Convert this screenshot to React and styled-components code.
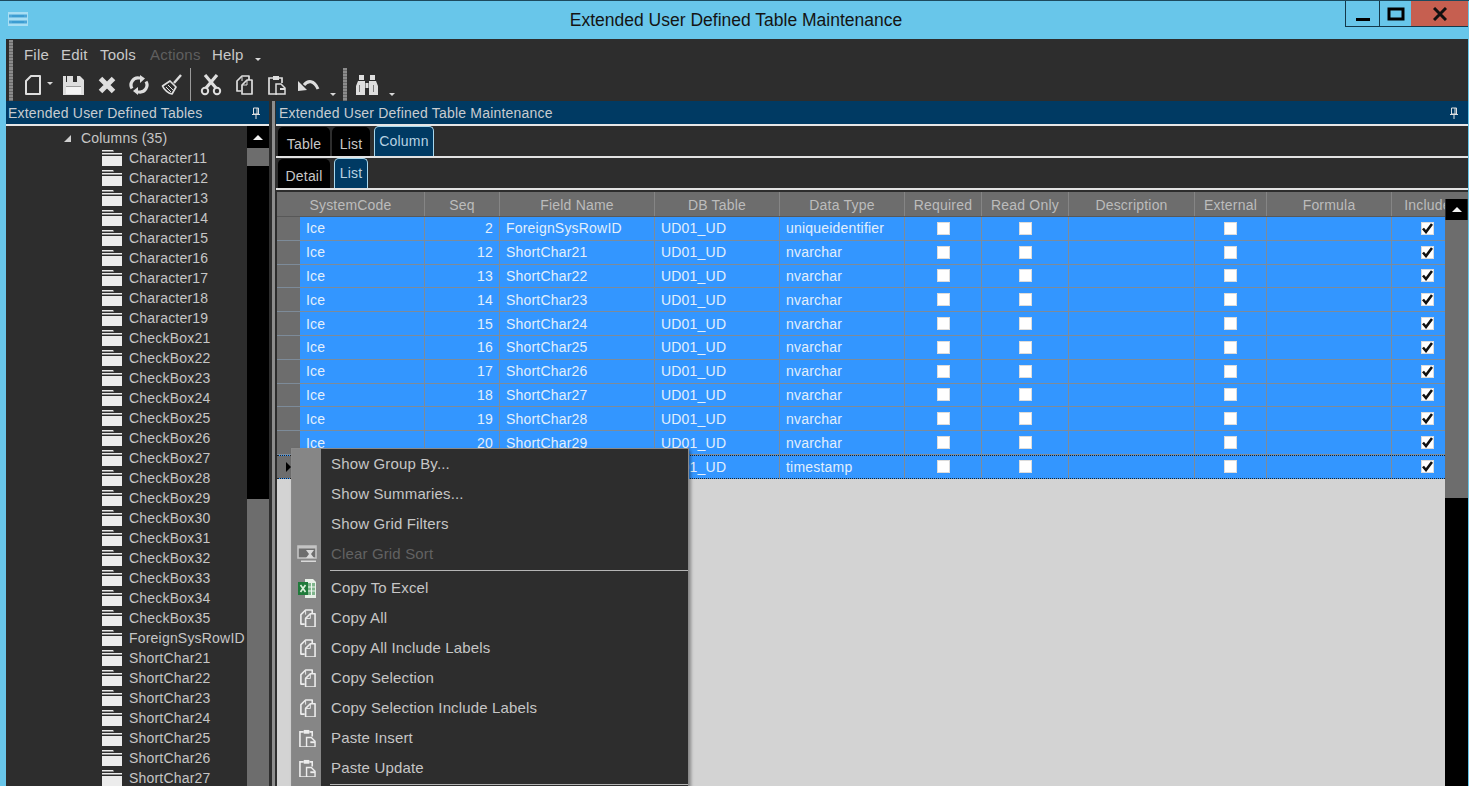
import React from 'react';
import styled, { createGlobalStyle } from 'styled-components';

const GlobalStyle = createGlobalStyle`
  html, body { margin: 0; padding: 0; height: 100%; overflow: hidden; background: #68c6ea; }
  body { font-family: "Liberation Sans", Arial, sans-serif; }
  * { box-sizing: border-box; }
`;

const treeItems = [
  'Character11', 'Character12', 'Character13', 'Character14', 'Character15', 'Character16', 'Character17',
  'Character18', 'Character19', 'CheckBox21', 'CheckBox22', 'CheckBox23', 'CheckBox24', 'CheckBox25',
  'CheckBox26', 'CheckBox27', 'CheckBox28', 'CheckBox29', 'CheckBox30', 'CheckBox31', 'CheckBox32',
  'CheckBox33', 'CheckBox34', 'CheckBox35', 'ForeignSysRowID', 'ShortChar21', 'ShortChar22', 'ShortChar23',
  'ShortChar24', 'ShortChar25', 'ShortChar26', 'ShortChar27',
];

const headers = ['Seq', 'Field Name', 'DB Table', 'Data Type', 'Required', 'Read Only', 'Description', 'External', 'Formula', 'Include'];

const rows = [
  [2, 'ForeignSysRowID', 'uniqueidentifier'],
  [12, 'ShortChar21', 'nvarchar'],
  [13, 'ShortChar22', 'nvarchar'],
  [14, 'ShortChar23', 'nvarchar'],
  [15, 'ShortChar24', 'nvarchar'],
  [16, 'ShortChar25', 'nvarchar'],
  [17, 'ShortChar26', 'nvarchar'],
  [18, 'ShortChar27', 'nvarchar'],
  [19, 'ShortChar28', 'nvarchar'],
  [20, 'ShortChar29', 'nvarchar'],
  [21, 'SysRevID', 'timestamp'],
];

// last column runs on under the grid's scrollbar
const columns = '23px 125px 75px 155px 125px 125px 77px 87px 126px 72px 125px 72px';

const Window = styled.div`
  width: 1469px;
  height: 786px;
  display: flex;
  flex-direction: column;
  position: relative;
  overflow: hidden;
  background: #68c6ea;
  border-top: 1px solid #1d4a5e;
`;

const TitleBar = styled.div`
  height: 38px;
  flex: none;
  display: flex;
  position: relative;
  justify-content: center;
  padding: 9px 0 0 3px;
  font-size: 17.5px;
  color: #141414;
`;

const AppIcon = styled.svg`
  position: absolute;
  left: 8px;
  top: 10px;
`;

const WinButtons = styled.div`
  position: absolute;
  top: 0;
  right: 1px;
  display: flex;
  height: 26px;
`;

const WinButton = styled.div`
  width: ${p => p.$w}px;
  height: 26px;
  display: flex;
  align-items: center;
  justify-content: center;
  background: ${p => p.$close ? '#c65f50' : 'transparent'};
  border-left: ${p => p.$close ? 'none' : '1px solid #14384a'};
  border-bottom: 1px solid #14384a;
`;

const Frame = styled.div`
  flex: 1;
  min-height: 0;
  margin: 0 1px 0 6px;
  background: #2d2d2d;
  display: flex;
  flex-direction: column;
  color: #c6c6c6;
  font-size: 14px;
  letter-spacing: 0.2px;
`;

const Gripper = styled.div`
  width: 4px;
  height: 100%;
  flex: none;
  margin: ${p => p.$margin || '0'};
  background: repeating-linear-gradient(to bottom, #8c8c8c 0 2px, #6a6a6a 2px 3px);
`;

const MenuBar = styled.div`
  height: 29px;
  flex: none;
  display: flex;
  align-items: center;
  padding: 1px 0 0 3px;
  font-size: 15px;
`;

const MenuLabel = styled.span`
  width: ${p => p.$w}px;
  flex: none;
  color: ${p => p.$off ? '#5f5f5f' : '#c9c9c9'};
`;

const Caret = styled.span`
  flex: none;
  width: 0;
  height: 0;
  align-self: flex-end;
  margin: ${p => p.$margin || '0 0 6px 0'};
  border-left: 3px solid transparent;
  border-right: 3px solid transparent;
  border-top: 3px solid #d8d8d8;
`;

const ToolBar = styled.div`
  height: 33px;
  flex: none;
  display: flex;
  align-items: center;
  padding-left: 3px;
`;

const Tool = styled.div`
  flex: none;
  width: ${p => p.$w}px;
  display: flex;
  justify-content: center;
  align-items: center;
`;

const ToolSep = styled.div`
  flex: none;
  width: 1px;
  height: 100%;
  background: #9a9a9a;
  margin: ${p => p.$margin};
`;

const Panes = styled.div`
  flex: 1;
  min-height: 0;
  display: flex;
`;

const LeftPane = styled.div`
  width: 263px;
  flex: none;
  display: flex;
  flex-direction: column;
  min-height: 0;
`;

const Splitter = styled.div`
  width: 3px;
  flex: none;
  margin: 0 1px 0 3px;
  background: #8d8d8d;
`;

const RightPane = styled.div`
  flex: 1;
  min-width: 0;
  display: flex;
  flex-direction: column;
  min-height: 0;
`;

const PaneHeader = styled.div`
  height: 25px;
  flex: none;
  display: flex;
  align-items: center;
  justify-content: space-between;
  padding: 1px ${p => p.$right}px 0 ${p => p.$left}px;
  background: #003a63;
  border-bottom: 2px solid #e6e6e6;
  color: #c8ccd0;
`;

const TreeArea = styled.div`
  flex: 1;
  min-height: 0;
  display: flex;
`;

const Tree = styled.div`
  flex: 1;
  min-width: 0;
  overflow: hidden;
  padding-top: 2px;
`;

const TreeRow = styled.div`
  height: 20px;
  display: flex;
  align-items: center;
  padding-left: ${p => p.$indent}px;
  white-space: nowrap;
`;

const ExpandMark = styled.span`
  width: 0;
  height: 0;
  margin-right: 10px;
  border-left: 7px solid transparent;
  border-bottom: 7px solid #cfcfcf;
`;

const FolderIcon = styled.svg`
  flex: none;
  margin-right: 7px;
`;

const TreeScroll = styled.div`
  width: 22px;
  flex: none;
  display: flex;
  flex-direction: column;
`;

const ScrollButton = styled.div`
  width: ${p => p.$w || 22}px;
  height: ${p => p.$h}px;
  flex: none;
  background: #000;
  display: flex;
  align-items: center;
  justify-content: center;
`;

const ScrollUp = styled.span`
  width: 0;
  height: 0;
  border-left: 5px solid transparent;
  border-right: 5px solid transparent;
  border-bottom: 5px solid #f2f2f2;
`;

const ScrollPart = styled.div`
  flex: ${p => p.$grow ? 1 : 'none'};
  width: 100%;
  height: ${p => p.$h ? `${p.$h}px` : 'auto'};
  background: ${p => p.$c};
`;

const TabRow = styled.div`
  height: 32px;
  flex: none;
  display: flex;
  align-items: flex-end;
  gap: 2px;
  padding-left: 2px;
  border-bottom: 2px solid #e2e2e2;
`;

const Tab = styled.div`
  height: ${p => p.$active ? 30 : 29}px;
  width: ${p => p.$w}px;
  margin-left: ${p => p.$active ? 2 : 0}px;
  display: flex;
  justify-content: center;
  align-items: center;
  padding-top: ${p => p.$active ? 0 : 5}px;
  padding-bottom: ${p => p.$active ? 1 : 0}px;
  border-radius: 5px 5px 0 0;
  background: ${p => p.$active ? '#003a63' : '#000'};
  border: ${p => p.$active ? '1px solid #a8d8ee' : 'none'};
  border-bottom: none;
  color: ${p => p.$active ? '#b9d2e2' : '#c8c8c8'};
`;

const GridArea = styled.div`
  flex: 1;
  min-height: 0;
  display: flex;
  padding-top: 2px;
  background: #2d2d2d;
`;

const GridMain = styled.div`
  flex: 1;
  min-width: 0;
  overflow: hidden;
  background: #d3d3d3;
  margin-left: 1px;
`;

const HeaderRow = styled.div`
  display: grid;
  grid-template-columns: ${columns};
  height: 25px;
  background: #6d6d6d;
  border-bottom: 1px solid #585858;
`;

const HeaderCell = styled.div`
  grid-column: ${p => p.$span ? `span ${p.$span}` : 'auto'};
  display: flex;
  align-items: center;
  justify-content: center;
  overflow: hidden;
  white-space: nowrap;
  color: #bcbcbc;
  padding-top: 2px;
  border-right: 1px solid #858585;
`;

const DataRow = styled.div`
  display: grid;
  grid-template-columns: ${columns};
  height: 23.8px;
  background: #3396ff;
  color: #e2effc;
  border-bottom: ${p => p.$current ? '1px dotted #222' : '1px solid #7d8b99'};
  border-top: ${p => p.$current ? '1px dotted #222' : 'none'};
`;

const RowHead = styled.div`
  background: #6d6d6d;
  display: flex;
  align-items: center;
  padding-left: 9px;
`;

const CurrentMark = styled.span`
  width: 0;
  height: 0;
  border-top: 5px solid transparent;
  border-bottom: 5px solid transparent;
  border-left: 5px solid #000;
`;

const Cell = styled.div`
  display: flex;
  align-items: center;
  justify-content: ${p => p.$align || 'flex-start'};
  padding: 0 6px;
  overflow: hidden;
  white-space: nowrap;
  border-right: 1px solid #7d8b99;
`;

const CheckBox = styled.span`
  width: 13px;
  height: 13px;
  background: #fff;
  border: 1px solid #dcdcdc;
  display: flex;
  align-items: center;
  justify-content: center;
`;

const GridScroll = styled.div`
  width: 23px;
  flex: none;
  display: flex;
  flex-direction: column;
  align-items: center;
`;

const ContextMenu = styled.div`
  position: absolute;
  left: 291px;
  top: 447px;
  width: 398px;
  height: 345px;
  display: flex;
  background: #2d2d2d;
  border: 1px solid #8a8a8a;
  box-shadow: 2px 2px 3px rgba(0, 0, 0, 0.35);
  color: #c6c6c6;
  font-size: 15px;
  letter-spacing: 0.15px;
`;

const MenuGutter = styled.div`
  width: 29px;
  flex: none;
  background: #868686;
  display: flex;
  flex-direction: column;
`;

const GutterSlot = styled.div`
  height: ${p => p.$h}px;
  flex: none;
  display: flex;
  align-items: center;
  justify-content: center;
  padding-left: 1px;
`;

const MenuList = styled.div`
  flex: 1;
  min-width: 0;
  display: flex;
  flex-direction: column;
`;

const MenuItem = styled.div`
  height: 30px;
  flex: none;
  display: flex;
  align-items: center;
  padding: 0 0 2px 10px;
  color: ${p => p.$off ? '#626262' : '#c6c6c6'};
`;

const MenuDivider = styled.div`
  height: 4px;
  flex: none;
  margin-left: 9px;
  border-top: 1px solid #b5b5b5;
  margin-top: 1px;
  margin-bottom: -1px;
`;

const fg = '#dedede';

const DocIcon = () => (
  <svg width="18" height="20" viewBox="0 0 18 20" fill="none" stroke={fg} strokeWidth="2"><path d="M7 1h9v18H2V6z" strokeLinejoin="round" /></svg>
);

const SaveIcon = () => (
  <svg width="21" height="20" viewBox="0 0 21 20">
    <path fill={fg} d="M0 1h17l4 4v15H0z" />
    <path fill="#2d2d2d" d="M10 1h4v6h-4zM3 1h1v6H3z" />
    <path fill="#9c9c9c" d="M3 11h15v1H3z" />
    <path fill="#f4f4f4" d="M3 12h15v7H3z" />
  </svg>
);

const CrossIcon = () => (
  <svg width="18" height="18" viewBox="0 0 18 18"><path stroke={fg} strokeWidth="5" d="M2.5 2.5l13 13M15.5 2.5l-13 13" /></svg>
);

const RefreshIcon = () => (
  <svg width="20" height="20" viewBox="0 0 20 20" fill="none" stroke={fg} strokeWidth="3.2">
    <path d="M3 13.5A7 7 0 0 1 10 3h2" />
    <path d="M17 6.5A7 7 0 0 1 10 17H8" />
    <path fill={fg} stroke="none" d="M11 0l5 3.5L11 8zM9 12v8l-5-4z" />
  </svg>
);

const BroomIcon = () => (
  <svg width="22" height="22" viewBox="0 0 22 22">
    <path stroke={fg} strokeWidth="2.4" d="M13 9l7-8" />
    <path fill="none" stroke={fg} strokeWidth="1.7" strokeLinejoin="round" d="M9 7l6 6-4 7c-3-.5-8-4-9.5-8z" />
    <path stroke={fg} d="M5 13l5 5M7 11l5 5" />
  </svg>
);

const CutIcon = () => (
  <svg width="22" height="22" viewBox="0 0 22 22" fill="none" stroke={fg}>
    <path strokeWidth="3.2" d="M5 1l11 13M17 1L6 14" />
    <circle cx="5" cy="17" r="3.2" strokeWidth="2" />
    <circle cx="17" cy="17" r="3.2" strokeWidth="2" />
  </svg>
);

const CopyIcon = ({ size = 18, color = fg }) => (
  <svg width={size} height={size * 20 / 18} viewBox="0 0 18 20" fill="none" stroke={color} strokeWidth="1.7" strokeLinejoin="round">
    <path d="M6 16H2V6l5-5h7v4" />
    <path d="M7 10l5-5h5v14H7z" />
    <path d="M7 6v-4M7 10h5V5" strokeWidth="1" />
  </svg>
);

const PasteIcon = ({ size = 18, color = fg }) => (
  <svg width={size} height={size * 20 / 18} viewBox="0 0 18 20" fill="none" stroke={color} strokeWidth="1.7">
    <path d="M5 3H1v16h8" />
    <path d="M11 3h3v5" />
    <path fill={color} stroke="none" d="M5 1h6v4H5z" />
    <path strokeWidth="1.5" d="M8 9h5l4 4v6H8z" />
    <path fill={color} stroke="none" d="M12 13h5v2h-5z" />
  </svg>
);

const UndoIcon = () => (
  <svg width="22" height="14" viewBox="0 0 22 14" fill="none"><path stroke={fg} strokeWidth="3" d="M6 7c4-5 10-5 14 4" /><path fill={fg} d="M0 3l9 9-9 1z" /></svg>
);

const BinocularsIcon = () => (
  <svg width="22" height="20" viewBox="0 0 22 20" fill={fg}>
    <path d="M3 0h5v5H3zM14 0h5v5h-5z" />
    <path d="M2 6h7v14H0V11zM13 6h7l2 5v9h-9z" />
    <path d="M9.5 8h3v5h-3z" />
    <path fill="#7a7a7a" d="M3 10h1v7H3zM17 10h1v7h-1z" />
  </svg>
);

const ExcelIcon = () => (
  <svg width="18" height="19" viewBox="0 0 18 19">
    <path fill="#e8f0e8" d="M7 0h8l3 3v16H7z" />
    <path fill="#7fb58c" d="M10 4h7v12h-7z" />
    <path stroke="#eef6ef" d="M13.5 4v12M10 8h7M10 12h7" />
    <path fill="#1f7a3a" d="M0 3h10v13H0z" />
    <path stroke="#d8efd8" strokeWidth="1.7" d="M2.5 6l5 7M7.5 6l-5 7" />
  </svg>
);

const ClearSortIcon = () => (
  <svg width="20" height="18" viewBox="0 0 20 18">
    <path fill="#6e6e6e" stroke="#c4c4c4" strokeWidth="1.6" d="M1 1h18v12H1z" />
    <path fill="#c4c4c4" d="M1 1h18v2.5H1z" />
    <path fill="#dadada" d="M9 5h8l-3 4 3 4H9l3-4zM4 15.5h15V17H4z" />
  </svg>
);

const Folder = () => (
  <FolderIcon width="20" height="16" viewBox="0 0 20 16">
    <path fill="#ececec" d="M0 0h11l1 1.5H0zM0 3h20v1.5H0zM0 6h20v10H0z" />
  </FolderIcon>
);

const Pin = () => (
  <svg width="10" height="12" viewBox="0 0 10 12" fill="none" stroke="#e0e0e0"><path d="M2.5 1h5v6h-5z" /><path d="M1 7.5h8M5 8v4M6 1v6" /></svg>
);

const Check = () => (
  <svg width="11" height="11" viewBox="0 0 11 11" fill="none"><path stroke="#111" strokeWidth="2.6" d="M1 5.5l3 3.5 6-8" /></svg>
);

export default function App() {
  return (
    <Window>
      <GlobalStyle />
      <TitleBar>
        <AppIcon width="20" height="16" viewBox="0 0 20 16">
          <path fill="#a8def3" d="M0 1h20v14H0z" />
          <path fill="#4ba6d8" d="M1 3.5h18v3H1zM1 9.5h18v3H1z" />
          <path fill="#2f93cc" d="M4 4.5h12v1H4zM4 10.5h12v1H4z" />
        </AppIcon>
        Extended User Defined Table Maintenance
        <WinButtons>
          <WinButton $w={34}>
            <svg width="16" height="14" viewBox="0 0 16 14"><path d="M1 11h14v3H1z" /></svg>
          </WinButton>
          <WinButton $w={32}>
            <svg width="18" height="14" viewBox="0 0 18 14" fill="none"><path stroke="#000" strokeWidth="3" d="M2 2h14v10H2z" /></svg>
          </WinButton>
          <WinButton $w={57} $close>
            <svg width="14" height="14" viewBox="0 0 14 14"><path stroke="#111" strokeWidth="3" d="M1 1l12 12M13 1L1 13" /></svg>
          </WinButton>
        </WinButtons>
      </TitleBar>
      <Frame>
        <MenuBar>
          <Gripper $margin="0 11px 0 0" />
          <MenuLabel $w={37}>File</MenuLabel>
          <MenuLabel $w={39}>Edit</MenuLabel>
          <MenuLabel $w={50}>Tools</MenuLabel>
          <MenuLabel $w={62} $off>Actions</MenuLabel>
          <MenuLabel $w={42}>Help</MenuLabel>
          <Caret $margin="0 0 7px 1px" />
        </MenuBar>
        <ToolBar>
          <Gripper $margin="0 8px 0 0" />
          <Tool $w={23}><DocIcon /></Tool>
          <Caret $margin="0 3px 16px 3px" />
          <Tool $w={35}><SaveIcon /></Tool>
          <Tool $w={31}><CrossIcon /></Tool>
          <Tool $w={33}><RefreshIcon /></Tool>
          <Tool $w={33}><BroomIcon /></Tool>
          <ToolSep $margin="0 9px 0 2px" />
          <Tool $w={22}><CutIcon /></Tool>
          <Tool $w={43}><CopyIcon /></Tool>
          <Tool $w={23}><PasteIcon /></Tool>
          <Tool $w={41}><UndoIcon /></Tool>
          <Caret $margin="0 0 5px 1px" />
          <Gripper $margin="0 0 0 7px" />
          <Tool $w={40}><BinocularsIcon /></Tool>
          <Caret $margin="0 0 5px 2px" />
        </ToolBar>
        <Panes>
          <LeftPane>
            <PaneHeader $left={2} $right={8}>
              Extended User Defined Tables
              <Pin />
            </PaneHeader>
            <TreeArea>
              <Tree>
                <TreeRow $indent={58}><ExpandMark />Columns (35)</TreeRow>
                {treeItems.map(name => (
                  <TreeRow key={name} $indent={96}><Folder />{name}</TreeRow>
                ))}
              </Tree>
              <TreeScroll>
                <ScrollButton $h={22}><ScrollUp /></ScrollButton>
                <ScrollPart $h={18} $c="#6d6d6d" />
                <ScrollPart $h={333} $c="#000" />
                <ScrollPart $grow $c="#6d6d6d" />
              </TreeScroll>
            </TreeArea>
          </LeftPane>
          <Splitter />
          <RightPane>
            <PaneHeader $left={3} $right={9}>
              Extended User Defined Table Maintenance
              <Pin />
            </PaneHeader>
            <TabRow>
              <Tab $w={52}>Table</Tab>
              <Tab $w={38}>List</Tab>
              <Tab $w={60} $active>Column</Tab>
            </TabRow>
            <TabRow>
              <Tab $w={52}>Detail</Tab>
              <Tab $w={34} $active>List</Tab>
            </TabRow>
            <GridArea>
              <GridMain>
                <HeaderRow>
                  <HeaderCell $span={2}>SystemCode</HeaderCell>
                  {headers.map(h => <HeaderCell key={h}>{h}</HeaderCell>)}
                </HeaderRow>
                {rows.map(([seq, field, type], i) => (
                  <DataRow key={seq} $current={i === rows.length - 1}>
                    <RowHead>{i === rows.length - 1 && <CurrentMark />}</RowHead>
                    <Cell>Ice</Cell>
                    <Cell $align="flex-end">{seq}</Cell>
                    <Cell>{field}</Cell>
                    <Cell>UD01_UD</Cell>
                    <Cell>{type}</Cell>
                    <Cell $align="center"><CheckBox /></Cell>
                    <Cell $align="center"><CheckBox /></Cell>
                    <Cell />
                    <Cell $align="center"><CheckBox /></Cell>
                    <Cell />
                    <Cell $align="center"><CheckBox><Check /></CheckBox></Cell>
                  </DataRow>
                ))}
              </GridMain>
              <GridScroll>
                <ScrollPart $h={7} $c="#6d6d6d" />
                <ScrollButton $h={21} $w={21}><ScrollUp /></ScrollButton>
                <ScrollPart $h={278} $c="#6d6d6d" />
                <ScrollPart $grow $c="#000" />
              </GridScroll>
            </GridArea>
          </RightPane>
        </Panes>
      </Frame>
      <ContextMenu>
        <MenuGutter>
          <GutterSlot $h={90} />
          <GutterSlot $h={30}><ClearSortIcon /></GutterSlot>
          <GutterSlot $h={4} />
          <GutterSlot $h={30}><ExcelIcon /></GutterSlot>
          <GutterSlot $h={30}><CopyIcon size={17} color="#ededed" /></GutterSlot>
          <GutterSlot $h={30}><CopyIcon size={17} color="#ededed" /></GutterSlot>
          <GutterSlot $h={30}><CopyIcon size={17} color="#ededed" /></GutterSlot>
          <GutterSlot $h={30}><CopyIcon size={17} color="#ededed" /></GutterSlot>
          <GutterSlot $h={30}><PasteIcon size={17} color="#ededed" /></GutterSlot>
          <GutterSlot $h={30}><PasteIcon size={17} color="#ededed" /></GutterSlot>
        </MenuGutter>
        <MenuList>
          <MenuItem>Show Group By...</MenuItem>
          <MenuItem>Show Summaries...</MenuItem>
          <MenuItem>Show Grid Filters</MenuItem>
          <MenuItem $off>Clear Grid Sort</MenuItem>
          <MenuDivider />
          <MenuItem>Copy To Excel</MenuItem>
          <MenuItem>Copy All</MenuItem>
          <MenuItem>Copy All Include Labels</MenuItem>
          <MenuItem>Copy Selection</MenuItem>
          <MenuItem>Copy Selection Include Labels</MenuItem>
          <MenuItem>Paste Insert</MenuItem>
          <MenuItem>Paste Update</MenuItem>
          <MenuDivider />
        </MenuList>
      </ContextMenu>
    </Window>
  );
}
